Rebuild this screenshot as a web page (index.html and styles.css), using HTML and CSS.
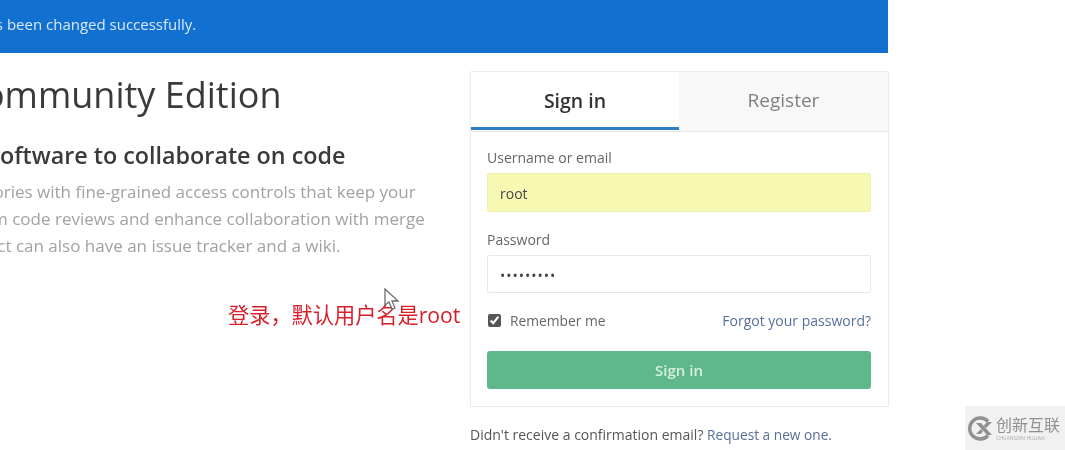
FILE: index.html
```html
<!doctype html>
<html>
<head>
<title>Sign in - GitLab</title>
<link rel="stylesheet" href="styles.css">
</head>

<body>
	<div class="flash">Your password has been changed successfully.</div>

	<div class="content">
		<div class="intro">
			<h1>GitLab Community Edition</h1>
			<h3>Open source software to collaborate on code</h3>
			<div class="introText">
				<div class="introLine1">Manage Git repositories with fine-grained access controls that keep your</div>
				<div class="introLine2">code safe. Perform code reviews and enhance collaboration with merge</div>
				<div class="introLine3">requests. Each project can also have an issue tracker and a wiki.</div>
			</div>
		</div>

		<div class="loginColumn">
			<div class="loginBox">
				<div class="tabs">
					<div class="tab tabActive">Sign in</div>
					<div class="tab">Register</div>
				</div>
				<form class="loginForm">
					<label class="fieldLabel">Username or email</label>
					<input class="formField formFieldFilled" type="text" value="root">
					<label class="fieldLabel fieldLabelPassword">Password</label>
					<input class="formField formFieldPassword" type="password" value="123456789">
					<div class="rememberRow">
						<label class="remember"><input class="rememberCheck" type="checkbox" checked> Remember me</label>
						<a class="link">Forgot your password?</a>
					</div>
					<div class="btnSignIn">Sign in</div>
				</form>
			</div>
			<p class="confirmation">Didn't receive a confirmation email? <a class="link">Request a new one.</a></p>
		</div>
	</div>

	<!-- annotation and cursor lie over the recording -->
	<div class="note">登录，默认用户名是root</div>
	<svg class="cursor" width="16" height="25" viewBox="0 0 16 25">
		<path d="M1 1 L1 17 L5 14 L8 21 L11 20 L8 13 L14 13 Z" fill="#fff" stroke="#6a6f73" stroke-width="1.3"/>
	</svg>

	<div class="watermark">
		<svg class="watermarkLogo" width="25" height="25" viewBox="0 0 25 25">
			<path d="M20 5.5 A10.5 10.5 0 1 0 20 19.5" fill="none" stroke="#8f9090" stroke-width="3.4"/>
			<path d="M8 7 L13 7 L24 19 L19 19 Z M24 6 L19 6 L15.5 10 L17.5 12.5 Z M8 18 L13 18 L15 15.5 L13 13 Z" fill="#8f9090"/>
		</svg>
		<div class="watermarkText">
			<div class="watermarkName">创新互联</div>
			<div class="watermarkSub">CHUANGXIN HULIAN</div>
		</div>
	</div>
</body>
</html>
```

FILE: styles.css
```css
html, body {
	margin: 0;
	height: 450px;
	overflow: hidden;
	background-color: #fff;
}

body {
	position: relative;
	font-family: "Open Sans", "Noto Sans", Arial, sans-serif;
	color: #4a4a4a;
	filter: blur(0.5px);
}

.flash {
	width: 888px;
	height: 53px;
	box-sizing: border-box;
	padding-top: 15px;
	background-color: #1270d0;
	color: #dbe9f8;
	font-size: 15px;
	line-height: 19px;
	white-space: nowrap;
	text-indent: -130px;
	overflow: hidden;
}

.content {
	display: flex;
	width: 889px;
	padding-top: 18px;
}

.intro {
	width: 470px;
	flex: none;
	overflow: hidden;
	white-space: nowrap;
	padding-top: 1px;
}

.intro h1 {
	margin: 0 0 0 -158px;
	font-size: 36px;
	line-height: 46px;
	font-weight: 400;
	color: #3a3a3a;
}

.intro h3 {
	margin: 21px 0 0 -160px;
	font-size: 23.3px;
	line-height: 32px;
	font-weight: 600;
	color: #3a3a3a;
}

.introText {
	margin-top: 7px;
	font-size: 17px;
	line-height: 27px;
	color: #a2a2a2;
}

.introLine1 {
	margin-left: -157px;
}

.introLine2 {
	margin-left: -142px;
}

.introLine3 {
	margin-left: -164px;
}

.loginColumn {
	width: 419px;
	flex: none;
}

.loginBox {
	border: 1px solid #ececec;
	border-radius: 2px;
	box-shadow: 0 0 2px rgba(0, 0, 0, 0.05);
}

.tabs {
	display: flex;
	height: 59px;
	border-bottom: 1px solid #e8e8e8;
}

.tab {
	flex: 1;
	text-align: center;
	font-size: 19px;
	line-height: 57px;
	color: #808080;
	background-color: #f8f8f8;
}

.tabActive {
	flex: none;
	width: 208px;
	font-size: 19.5px;
	font-weight: 600;
	color: #333;
	background-color: #fff;
	border-bottom: 3px solid #2f7fc8;
	box-sizing: border-box;
	height: 58px;
}

.loginForm {
	display: flex;
	flex-direction: column;
	padding: 16px 17px 17px 16px;
}

.fieldLabel {
	font-size: 14px;
	line-height: 19px;
	color: #666;
	margin-bottom: 6px;
}

.fieldLabelPassword {
	margin-top: 18px;
}

.formField {
	height: 39px;
	box-sizing: border-box;
	padding: 2px 12px 0;
	border: 1px solid #e8e8e8;
	border-radius: 2px;
	font-family: inherit;
	font-size: 14px;
	color: #444;
	background-color: #fff;
	outline: none;
}

.formFieldFilled {
	background-color: #f7f8b2;
	border-color: #eef0b0;
}

.formFieldPassword {
	height: 38px;
	letter-spacing: 1px;
}

.rememberRow {
	display: flex;
	justify-content: space-between;
	align-items: center;
	margin-top: 17px;
	height: 20px;
}

.remember {
	display: flex;
	align-items: center;
	font-size: 13.8px;
	color: #666;
}

.rememberCheck {
	width: 13px;
	height: 13px;
	margin: 0 9px 0 1px;
	accent-color: #555;
}

.link {
	font-size: 14px;
	color: #56709a;
}

.confirmation .link {
	font-size: 13.7px;
}

.btnSignIn {
	margin-top: 21px;
	height: 38px;
	border-radius: 3px;
	background-color: #5fb88c;
	color: #d6efe2;
	font-size: 15px;
	font-weight: 600;
	line-height: 38px;
	text-align: center;
}

.confirmation {
	margin: 18px 0 0;
	font-size: 14px;
	line-height: 19px;
	color: #555;
	white-space: nowrap;
}

.note {
	position: absolute;
	left: 228px;
	top: 300px;
	font-size: 21.2px;
	line-height: 30px;
	color: #d81e28;
	font-family: "Open Sans", "Noto Sans CJK SC", sans-serif;
	white-space: nowrap;
}

.cursor {
	position: absolute;
	left: 384px;
	top: 288px;
}

.watermark {
	position: absolute;
	right: 0;
	bottom: 0;
	width: 100px;
	height: 44px;
	display: flex;
	align-items: center;
	gap: 3px;
	box-sizing: border-box;
	padding-left: 3px;
	background-color: #f1f1f1;
}

.watermarkName {
	font-family: "Noto Sans CJK SC", sans-serif;
	font-size: 16px;
	line-height: 17px;
	color: #909090;
}

.watermarkSub {
	margin-top: 2px;
	font-size: 5px;
	line-height: 6px;
	color: #aaa;
	white-space: nowrap;
}
```
